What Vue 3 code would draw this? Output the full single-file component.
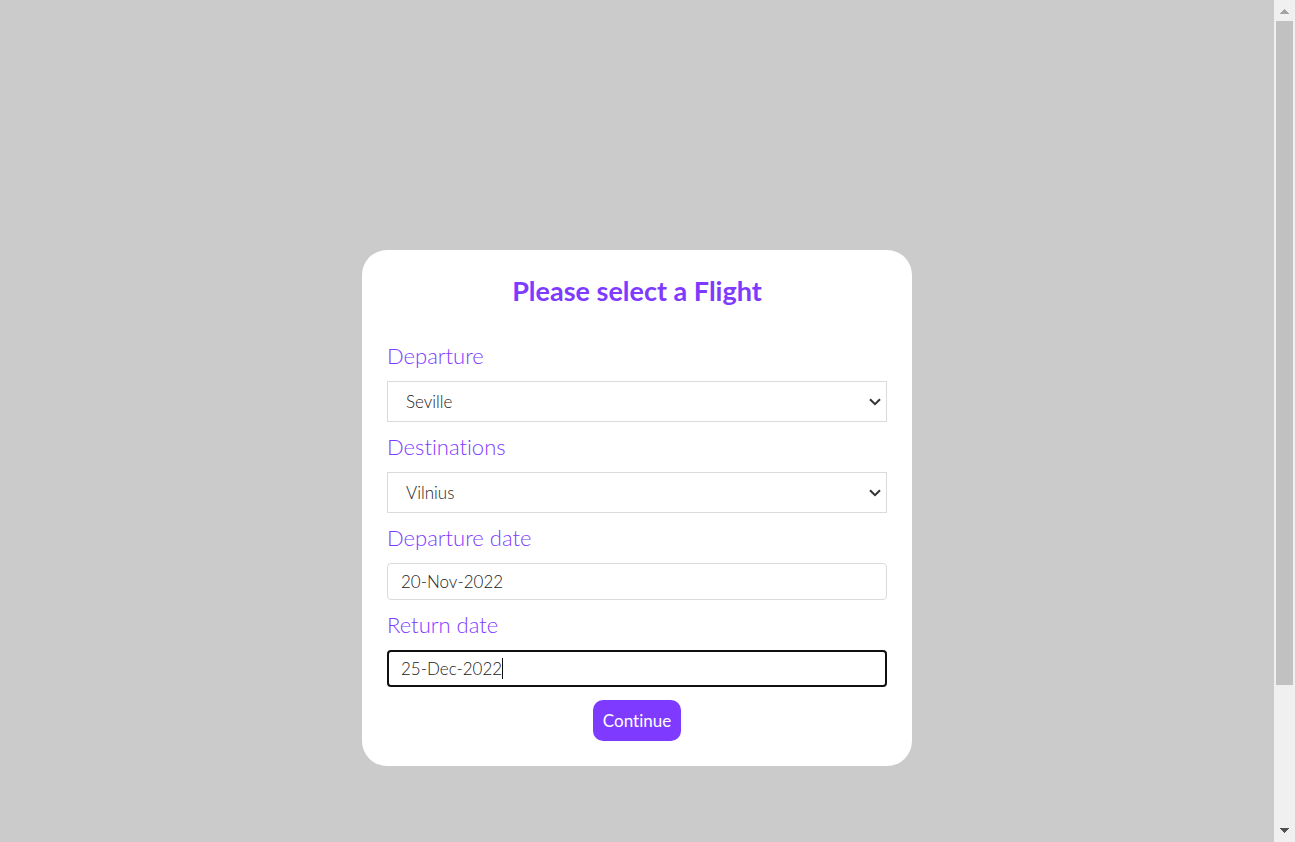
<script setup>
import { ref } from 'vue'

const cities = ['Seville', 'Vilnius', 'London', 'Paris']
const departure = ref('Seville')
const destination = ref('Vilnius')
const departureDate = ref('20-Nov-2022')
const returnDate = ref('25-Dec-2022')
</script>

<template>
  <div class="page">
    <main class="content">
      <form class="card" @submit.prevent>
        <h1 class="title">Please select a Flight</h1>

        <label class="label" for="departure">Departure</label>
        <div class="field">
          <select id="departure" v-model="departure" class="control select">
            <option v-for="city in cities" :key="city">{{ city }}</option>
          </select>
          <svg class="chevron" viewBox="0 0 12 8" aria-hidden="true">
            <path d="M1 1.2 6 6.2 11 1.2" />
          </svg>
        </div>

        <label class="label" for="destination">Destinations</label>
        <div class="field">
          <select id="destination" v-model="destination" class="control select">
            <option v-for="city in cities" :key="city">{{ city }}</option>
          </select>
          <svg class="chevron" viewBox="0 0 12 8" aria-hidden="true">
            <path d="M1 1.2 6 6.2 11 1.2" />
          </svg>
        </div>

        <label class="label" for="departure-date">Departure date</label>
        <div class="field">
          <input id="departure-date" v-model="departureDate" class="control input" type="text" />
        </div>

        <label class="label" for="return-date">Return date</label>
        <div class="field">
          <input id="return-date" v-model="returnDate" class="control input active" type="text" />
          <span class="caret" aria-hidden="true"></span>
        </div>

        <button class="submit" type="submit">Continue</button>
      </form>
    </main>

    <div class="scrollbar" aria-hidden="true">
      <svg class="arrow up" viewBox="0 0 21 21" shape-rendering="crispEdges">
        <path d="M6 14 10.5 9 15 14Z" />
      </svg>
      <div class="track"><div class="thumb"></div></div>
      <svg class="arrow down" viewBox="0 0 21 21" shape-rendering="crispEdges">
        <path d="M6 7 10.5 12 15 7Z" />
      </svg>
    </div>
  </div>
</template>

<style>
body {
  background: #cbcbcb;
}
</style>

<style scoped>
.page {
  display: flex;
  min-height: 100vh;
  font-family: Lato, "Open Sans", sans-serif;
  font-weight: 300;
  font-variant-ligatures: none;
}

.content {
  flex: 1;
  padding-top: 250px;
}

.card {
  box-sizing: border-box;
  display: flex;
  flex-direction: column;
  max-width: 550px;
  margin: 0 auto;
  padding: 25px;
  border-radius: 25px;
  background: #fff;
}

.title {
  margin: 0 0 24px;
  color: #7e3bff;
  font-size: 27px;
  font-weight: 700;
  line-height: 32px;
  text-align: center;
}

.label {
  margin: 10px 0;
  color: #7e3bff;
  font-size: 22px;
  line-height: 30px;
}

.field {
  position: relative;
  display: flex;
}

.control {
  box-sizing: border-box;
  flex: 1;
  min-width: 0;
  margin: 0;
  border: 1px solid #dbdbdb;
  outline: none;
  background: #fff;
  color: #222;
  font: inherit;
  font-size: 17px;
}

.select {
  height: 41px;
  padding: 0 18px;
  border-radius: 0;
  appearance: none;
}

.input {
  height: 37px;
  padding: 0 13px;
  border-radius: 4px;
}

.active {
  padding: 0 12px;
  border: 2px solid #101010;
}

.chevron {
  position: absolute;
  top: 17px;
  right: 6px;
  width: 12px;
  height: 8px;
  fill: none;
  stroke: #333;
  stroke-width: 2;
  pointer-events: none;
}

.caret {
  position: absolute;
  top: 8px;
  left: 115px;
  width: 1px;
  height: 21px;
  background: #111;
}

.submit {
  align-self: center;
  height: 41px;
  margin-top: 13px;
  padding: 0 10px;
  border: 0;
  border-radius: 10px;
  background: #7e3bff;
  color: #fff;
  font: inherit;
  font-size: 17px;
  font-weight: 400;
}

.scrollbar {
  display: flex;
  flex-direction: column;
  width: 21px;
  height: 100vh;
  background: #f0f0f0;
}

.arrow {
  width: 21px;
  height: 21px;
}

.up {
  fill: #a3a3a3;
}

.down {
  fill: #505050;
}

.track {
  flex: 1;
  padding: 0 2px;
}

.thumb {
  height: 83%;
  background: #c1c1c1;
}
</style>
